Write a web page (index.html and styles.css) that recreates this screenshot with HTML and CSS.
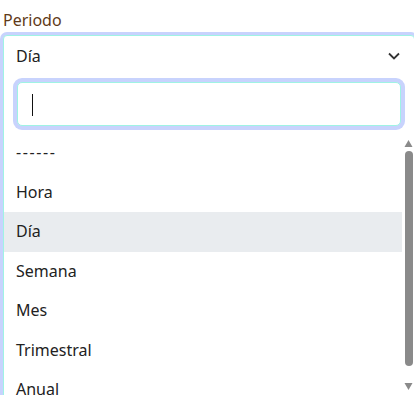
FILE: index.html
```html
<!DOCTYPE html>
<html lang="es">
<head>
    <meta charset="UTF-8">
    <title>Periodo</title>
    <meta name="viewport" content="width=device-width, initial-scale=1.0">
    <link rel="stylesheet" href="styles.css">
</head>
<body>

    <div class="field">
        <label class="field-label" for="periodo-search">Periodo</label>
        <!-- selector con el desplegable abierto -->
        <div class="picker">
            <div class="picker-selected">
                <span>Día</span>
                <svg class="chevron" width="12" height="8" viewBox="0 0 12 8"><path d="M1 1.5l5 5 5-5" fill="none" stroke="#333" stroke-width="1.8"/></svg>
            </div>
            <div class="picker-dropdown">
                <div class="picker-search">
                    <input type="text" id="periodo-search" autofocus>
                    <span class="caret"></span>
                </div>
                <div class="picker-list">
                    <ul class="picker-options">
                        <li class="is-empty">------</li>
                        <li>Hora</li>
                        <li class="is-active">Día</li>
                        <li>Semana</li>
                        <li>Mes</li>
                        <li>Trimestral</li>
                        <li>Anual</li>
                    </ul>
                    <div class="scrollbar">
                        <svg class="scroll-btn" width="12" height="16" viewBox="0 0 12 16"><path d="M2.5 14h8l-4-7z" fill="#8a8a8a"/></svg>
                        <div class="scroll-track"><div class="scroll-thumb"></div></div>
                        <svg class="scroll-btn" width="12" height="16" viewBox="0 0 12 16"><path d="M2.5 4h8l-4 7z" fill="#8a8a8a"/></svg>
                    </div>
                </div>
            </div>
        </div>
    </div>

</body>
</html>
```

FILE: styles.css
```css
html, body {
  margin: 0; padding: 0; height: 100%; overflow: hidden;
  font-family: "Noto Sans", "Open Sans", sans-serif; font-size: 16px; color: #222;
}
body { padding: 0 3px; background: #fff; }
.field { padding-top: 8px; }
.field-label { display: block; line-height: 24px; margin-bottom: 3px; color: #5f3a18; }

.picker {
  width: 412px; box-sizing: border-box;
  border: 1px solid #9ff3e4; border-radius: 4px 4px 0 0;
  box-shadow: 0 0 0 3px #c8d3fd; background: #fff;
}
.picker-selected {
  display: flex; justify-content: space-between; align-items: center;
  padding: 8px 14px 8px 12px; line-height: 24px;
}
.chevron { display: block; }

.picker-search { position: relative; padding: 6px 13px 7px; }
.picker-search input {
  display: block; width: 100%; height: 44px; box-sizing: border-box;
  padding: 0 14px; font: inherit; font-size: 18px; color: #222;
  border: 1px solid #9ff3e4; border-radius: 5px;
  box-shadow: 0 0 0 4px #c8d3fd; outline: none; caret-color: transparent;
}
.caret { position: absolute; left: 28px; top: 18px; width: 1px; height: 22px; background: #111; }

.picker-list { display: flex; height: 262px; }
.picker-options {
  flex: 1; list-style: none; margin: 0; padding: 0; overflow: hidden;
}
.picker-options li { padding: 8px 12px; line-height: 23.5px; white-space: nowrap; }
.picker-options li.is-empty { letter-spacing: 1.6px; }
.picker-options li.is-active { background-color: #e9ecef; }

/* barra de scroll dibujada a mano */
.scrollbar { flex: 0 0 12px; display: flex; flex-direction: column; background: #fff; }
.scroll-btn { display: block; flex: 0 0 16px; }
.scroll-track { flex: 1; padding: 2px 1px 0 3px; }
.scroll-thumb { height: 215px; background: #8a8a8a; border-radius: 4px; }
```
